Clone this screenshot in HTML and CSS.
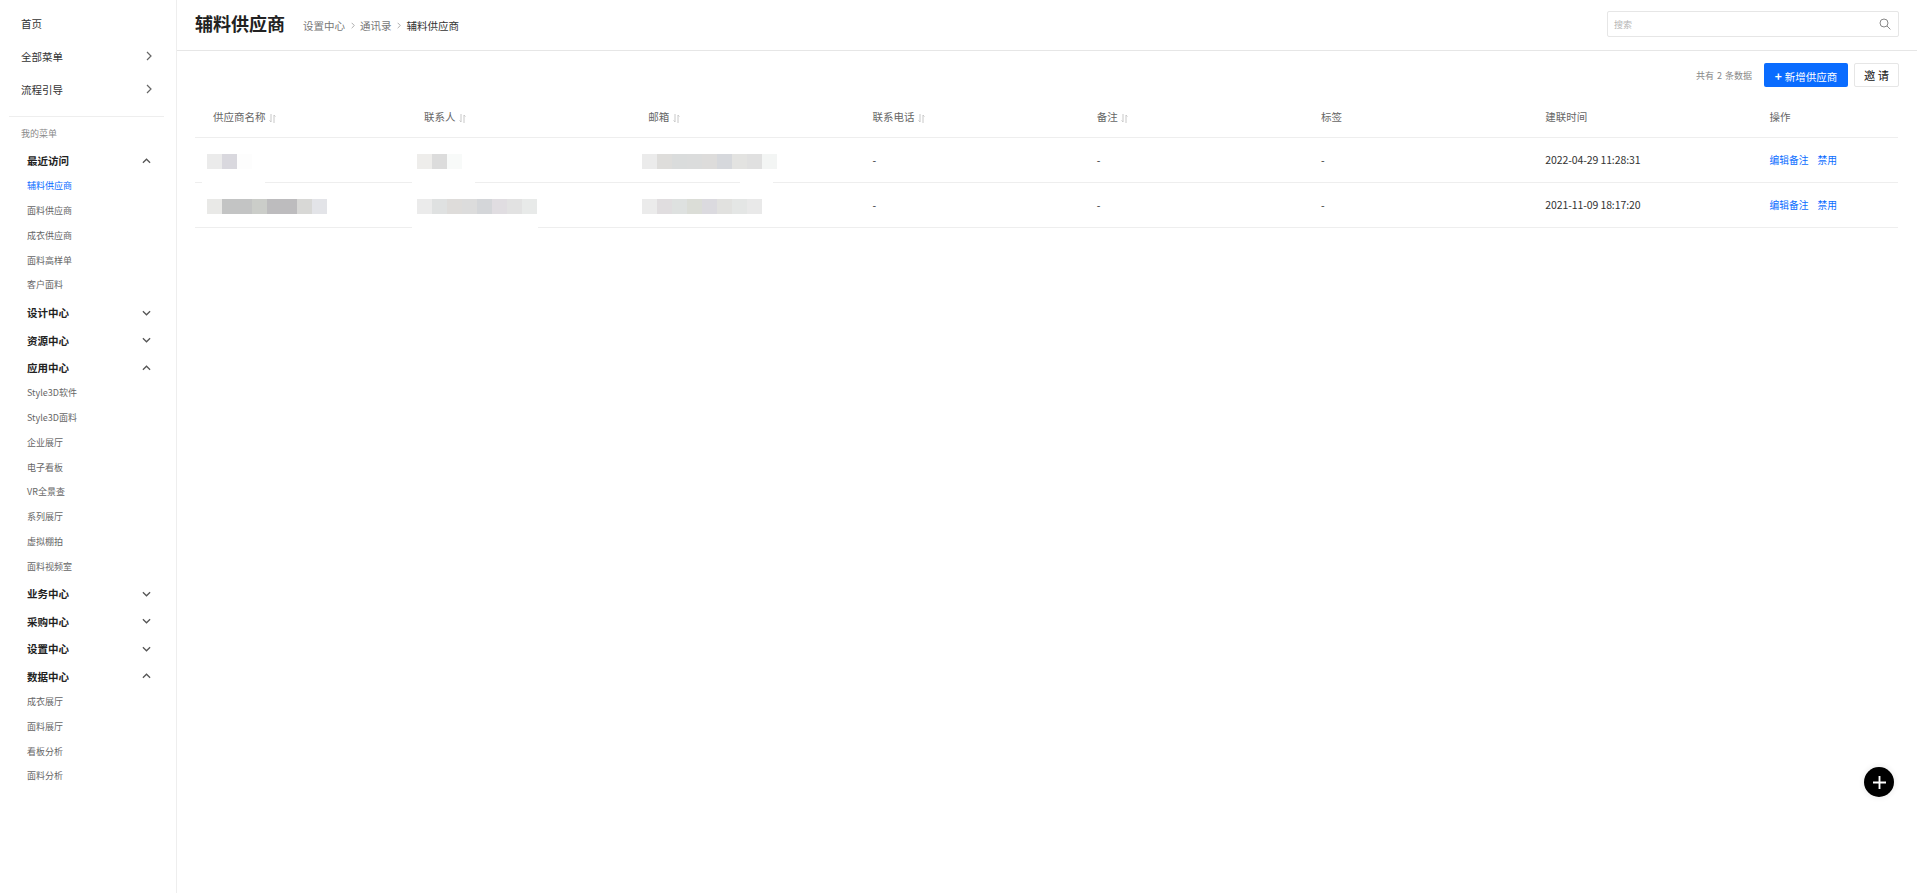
FILE: index.html
```html
<!DOCTYPE html>
<html lang="zh-CN">
<head>
    <meta charset="UTF-8">
    <meta name="viewport" content="width=device-width, initial-scale=1.0">
    <title>辅料供应商</title>
    <link rel="stylesheet" href="styles.css">
</head>
<body>
<svg class="icon-defs" width="0" height="0" aria-hidden="true">
    <symbol id="chev-right" viewBox="0 0 6 10"><path d="M1 1l4 4-4 4" fill="none" stroke="currentColor" stroke-width="1.2"/></symbol>
    <symbol id="chev-down" viewBox="0 0 10 6"><path d="M1 1l4 4 4-4" fill="none" stroke="currentColor" stroke-width="1.4"/></symbol>
    <symbol id="chev-up" viewBox="0 0 10 6"><path d="M1 5l4-4 4 4" fill="none" stroke="currentColor" stroke-width="1.4"/></symbol>
    <symbol id="sort" viewBox="0 0 7 9"><path d="M2 0v8M.6 6.4L2 8M5 9V1M6.4 2.6L5 1" fill="none" stroke="currentColor" stroke-width="1"/></symbol>
</svg>

<div class="app">
    <aside class="sidebar">
        <div class="top-nav">
            <div class="top-item">首页</div>
            <div class="top-item">全部菜单 <svg class="chev-r"><use href="#chev-right"/></svg></div>
            <div class="top-item">流程引导 <svg class="chev-r"><use href="#chev-right"/></svg></div>
        </div>
        <div class="my-menu">我的菜单</div>

        <div class="group-head">最近访问 <svg class="chev"><use href="#chev-up"/></svg></div>
        <ul class="sub">
            <li class="active">辅料供应商</li>
            <li>面料供应商</li>
            <li>成衣供应商</li>
            <li>面料高样单</li>
            <li>客户面料</li>
        </ul>
        <div class="group-head">设计中心 <svg class="chev"><use href="#chev-down"/></svg></div>
        <div class="group-head">资源中心 <svg class="chev"><use href="#chev-down"/></svg></div>
        <div class="group-head">应用中心 <svg class="chev"><use href="#chev-up"/></svg></div>
        <ul class="sub">
            <li>Style3D软件</li>
            <li>Style3D面料</li>
            <li>企业展厅</li>
            <li>电子看板</li>
            <li>VR全景查</li>
            <li>系列展厅</li>
            <li>虚拟棚拍</li>
            <li>面料视频室</li>
        </ul>
        <div class="group-head">业务中心 <svg class="chev"><use href="#chev-down"/></svg></div>
        <div class="group-head">采购中心 <svg class="chev"><use href="#chev-down"/></svg></div>
        <div class="group-head">设置中心 <svg class="chev"><use href="#chev-down"/></svg></div>
        <div class="group-head">数据中心 <svg class="chev"><use href="#chev-up"/></svg></div>
        <ul class="sub">
            <li>成衣展厅</li>
            <li>面料展厅</li>
            <li>看板分析</li>
            <li>面料分析</li>
        </ul>
    </aside>

    <main class="main">
        <header class="header">
            <h1 class="title">辅料供应商</h1>
            <div class="crumbs">
                <span>设置中心</span>
                <svg class="crumb-sep"><use href="#chev-right"/></svg>
                <span>通讯录</span>
                <svg class="crumb-sep"><use href="#chev-right"/></svg>
                <span class="current">辅料供应商</span>
            </div>
            <div class="search">
                <span class="search-text">搜索</span>
                <svg class="search-icon" viewBox="0 0 12 12"><circle cx="5" cy="5" r="4" fill="none" stroke="currentColor"/><path d="M8 8l3.4 3.4" stroke="currentColor"/></svg>
            </div>
        </header>

        <section class="content">
            <div class="toolbar">
                <span class="count">共有 2 条数据</span>
                <button class="btn btn-primary"><span class="plus">+</span>新增供应商</button>
                <button class="btn btn-plain">邀 请</button>
            </div>

            <table class="list">
                <colgroup>
                    <col class="c-name"><col class="c-wide"><col class="c-wide"><col class="c-wide"><col class="c-wide"><col class="c-wide"><col class="c-wide"><col class="c-ops">
                </colgroup>
                <thead>
                    <tr>
                        <th>供应商名称 <svg class="sort"><use href="#sort"/></svg></th>
                        <th>联系人 <svg class="sort"><use href="#sort"/></svg></th>
                        <th>邮箱 <svg class="sort"><use href="#sort"/></svg></th>
                        <th>联系电话 <svg class="sort"><use href="#sort"/></svg></th>
                        <th>备注 <svg class="sort"><use href="#sort"/></svg></th>
                        <th>标签</th>
                        <th>建联时间</th>
                        <th>操作</th>
                    </tr>
                </thead>
                <tbody>
                    <tr>
                        <td><div class="mosaic m-name1"></div></td>
                        <td><div class="mosaic m-contact1"></div></td>
                        <td><div class="mosaic m-mail1"></div></td>
                        <td>-</td>
                        <td>-</td>
                        <td>-</td>
                        <td class="time">2022-04-29 11:28:31</td>
                        <td class="ops"><a>编辑备注</a><a>禁用</a></td>
                    </tr>
                    <tr>
                        <td><div class="mosaic m-name2"></div></td>
                        <td><div class="mosaic m-contact2"></div></td>
                        <td><div class="mosaic m-mail2"></div></td>
                        <td>-</td>
                        <td>-</td>
                        <td>-</td>
                        <td class="time">2021-11-09 18:17:20</td>
                        <td class="ops"><a>编辑备注</a><a>禁用</a></td>
                    </tr>
                </tbody>
            </table>
        </section>
    </main>
</div>

<button class="fab" aria-label="add"><svg viewBox="0 0 14 14"><path d="M7 0v14M0 7h14" stroke="#fff" stroke-width="2"/></svg></button>
</body>
</html>
```

FILE: styles.css
```css
* {
    margin: 0;
    padding: 0;
    box-sizing: border-box;
    font-family: "Noto Sans CJK SC", "Noto Sans", sans-serif;
}
body {
    background: #fff;
    color: #222;
    overflow: hidden;
}
.icon-defs {
    position: absolute;
}
.app {
    display: flex;
    height: 893px;
}

/* sidebar */
.sidebar {
    width: 177px;
    flex-shrink: 0;
    border-right: 1px solid #eeeeee;
    padding-top: 6.5px;
}
.top-nav {
    margin: 0 12px 0 9px;
    padding-bottom: 10px;
    border-bottom: 1px solid #eeeeee;
}
.top-item {
    height: 33px;
    padding-left: 12px;
    display: flex;
    align-items: center;
    justify-content: space-between;
    font-size: 10.5px;
    color: #333;
}
.chev-r {
    width: 6px;
    height: 10px;
    color: #666;
    margin-right: 12px;
}
.my-menu {
    height: 30.25px;
    padding: 8px 0 0 21px;
    line-height: 18px;
    font-size: 9px;
    color: #888;
}
.group-head {
    height: 27.5px;
    padding: 0 25px 0 27px;
    display: flex;
    align-items: center;
    justify-content: space-between;
    font-size: 10.5px;
    font-weight: 700;
    color: #222;
}
.chev {
    width: 9px;
    height: 6px;
    color: #555;
}
.sub {
    list-style: none;
    margin-top: -1px;
    padding-bottom: 1.75px;
}
.sub li {
    height: 24.75px;
    line-height: 24.75px;
    padding: 1px 0 0 27px;
    font-size: 9px;
    color: #666;
}
.sub li.active {
    color: #0a6cff;
}

/* header */
.main {
    flex: 1;
    min-width: 0;
}
.header {
    height: 51px;
    border-bottom: 1px solid #e6e6e6;
    padding: 0 18px 0 18px;
    display: flex;
    align-items: center;
}
.title {
    font-size: 18px;
    font-weight: 700;
    color: #222;
    line-height: 24px;
    margin-bottom: 5px;
}
.crumbs {
    margin-left: 18px;
    display: flex;
    align-items: center;
    font-size: 10.5px;
    color: #777;
}
.crumbs .current {
    color: #333;
}
.crumb-sep {
    width: 4px;
    height: 7px;
    margin: 0 5.5px;
    color: #999;
}
.search {
    margin-left: auto;
    margin-bottom: 2px;
    width: 292px;
    height: 26px;
    border: 1px solid #e6e6e6;
    border-radius: 2px;
    padding: 0 7px 0 6px;
    display: flex;
    align-items: center;
    justify-content: space-between;
}
.search-text {
    font-size: 9px;
    color: #b5b5b5;
}
.search-icon {
    width: 12px;
    height: 12px;
    color: #888;
}

/* content */
.content {
    padding: 12px 18px 0;
}
.toolbar {
    height: 24px;
    display: flex;
    align-items: center;
    justify-content: flex-end;
}
.count {
    font-size: 9px;
    color: #888;
    margin-right: 12px;
    word-spacing: 1px;
}
.btn {
    height: 24px;
    border-radius: 2px;
    font-size: 10.5px;
    cursor: pointer;
}
.btn-primary {
    width: 84px;
    border: 0;
    background: #0a6cff;
    color: #fff;
}
.plus {
    font-size: 12px;
    font-weight: 700;
    margin-right: 3px;
}
.btn-plain {
    width: 45px;
    margin-left: 6px;
    border: 1px solid #e6e6e6;
    background: #fff;
    color: #111;
    font-size: 11.25px;
}
.list {
    width: 1703px;
    margin-top: 5px;
    border-collapse: collapse;
    table-layout: fixed;
}
.c-name {
    width: 211px;
}
.c-wide {
    width: 224.25px;
}
.c-ops {
    width: 146.5px;
}
.list th, .list td {
    height: 45px;
    padding-left: 18px;
    text-align: left;
    font-size: 10.5px;
    font-weight: 400;
    border-bottom: 1px solid #eeeeee;
}
.list th {
    padding-top: 4px;
    color: #666;
}
.list td {
    color: #333;
}
.list .time {
    letter-spacing: -0.1px;
}
.sort {
    width: 7px;
    height: 9px;
    color: #c8c8c8;
    vertical-align: -2px;
    margin-left: 1px;
}
.list .ops {
    font-size: 9.75px;
    color: #0a6cff;
}
.ops a {
    margin-right: 9px;
}

/* blurred cell values, 15px blocks */
.mosaic {
    position: relative;
    height: 15px;
    margin: 4px 0 0 -6px;
}
/* white haze from the blur that eats part of the row line */
.mosaic::after {
    content: "";
    position: absolute;
    left: -5px;
    top: 27px;
    height: 3px;
    background: #fff;
}
.m-name1 {
    background: linear-gradient(to right, #ebebeb 0 15px, #d9d8de 15px 30px, #fdfdfd 30px 45px, transparent 45px);
}
.m-name1::after {
    width: 63px;
}
.m-contact1 {
    margin-left: -7px;
    background: linear-gradient(to right, #eeedeb 0 15px, #dcdcdc 15px 30px, #f8faf9 30px 45px, transparent 45px);
}
.m-contact1::after {
    width: 63px;
}
.m-mail1 {
    background: linear-gradient(to right, #ebebeb 0 15px, #dedddb 15px 30px, #dadcdc 30px 45px, #dbdcdc 45px 60px, #dddcdb 60px 75px, #d6d8dc 75px 90px, #e3e3e1 90px 105px, #e0e0e0 105px 120px, #f3f5f4 120px 135px, transparent 135px);
}
.m-mail1::after {
    left: 98px;
    width: 33px;
}
.m-name2 {
    background: linear-gradient(to right, #e9e9e7 0 15px, #c3c4c4 15px 45px, #cbcdc9 45px 60px, #bdbcbe 60px 90px, #d8d8d6 90px 105px, #e3e4e8 105px 120px, transparent 120px);
}
.m-name2::after {
    display: none;
}
.m-contact2 {
    margin-left: -7px;
    background: linear-gradient(to right, #ebebeb 0 15px, #dfe1e1 15px 30px, #dedcda 30px 45px, #dcdcdc 45px 60px, #d4d6d9 60px 75px, #e0dde1 75px 90px, #e2e2e2 90px 105px, #e8eae9 105px 120px, transparent 120px);
}
.m-contact2::after {
    width: 126px;
}
.m-mail2 {
    background: linear-gradient(to right, #ebebeb 0 15px, #e0dddf 15px 30px, #dee1e0 30px 45px, #dbddd7 45px 60px, #dbdadf 60px 75px, #e1e1df 75px 90px, #e4e6e5 90px 105px, #e9e9e9 105px 120px, transparent 120px);
}
.m-mail2::after {
    display: none;
}

/* floating add */
.fab {
    position: fixed;
    left: 1864px;
    top: 767px;
    width: 30px;
    height: 30px;
    border: 0;
    border-radius: 50%;
    background: #000;
    box-shadow: 0 0 6px rgba(0, 0, 0, 0.1);
    display: flex;
    align-items: center;
    justify-content: center;
}
.fab svg {
    width: 13px;
    height: 13px;
}
```
